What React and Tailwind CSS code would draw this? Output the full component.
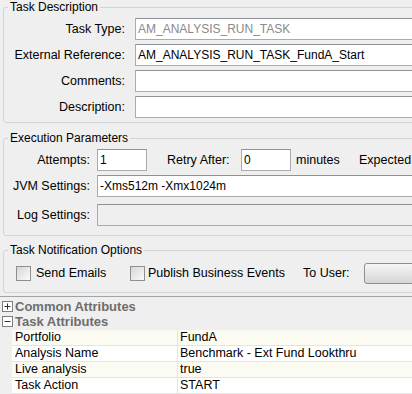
const Field = ({ children, className = '' }) => (
  <div className={`h-[22px] border border-[#a9abae] border-t-[#8e9196] bg-white pl-[2px] flex items-center text-[12px] leading-none whitespace-nowrap ${className}`}>
    {children}
  </div>
);

const Box = () => (
  <span className="w-[15px] h-[15px] shrink-0 border border-[#8e8f8f] bg-gradient-to-br from-[#d6d6d6] to-[#fbfbfb]" />
);

const TreeBox = ({ open }) => (
  <svg width="11" height="11" viewBox="0 0 11 11" className="shrink-0">
    <rect x="0.5" y="0.5" width="10" height="10" fill="#fff" stroke="#7f7f7f" />
    <path d="M2.5 5.5h6" stroke="#333" />
    {!open && <path d="M5.5 2.5v6" stroke="#333" />}
  </svg>
);

const attrs = [
  ['Portfolio', 'FundA'],
  ['Analysis Name', 'Benchmark - Ext Fund Lookthru'],
  ['Live analysis', 'true'],
  ['Task Action', 'START'],
];

export default function App() {
  return (
    <div className="w-[412px] h-[394px] overflow-hidden bg-[#efefef] text-[12.5px] text-black font-['Liberation_Sans',Arial,sans-serif]">
      <div className="w-[480px]">
        {/* task description */}
        <fieldset className="ml-[3px] border border-[#d0d5d9] rounded-[3px] pt-[4px] pb-[4px]">
          <legend className="ml-[4px] px-[2px] text-[12px] leading-[14px]">Task Description</legend>
          <div className="flex flex-col gap-[4px]">
            {[
              ['Task Type:', 'AM_ANALYSIS_RUN_TASK', 'text-[#8a8a8a]'],
              ['External Reference:', 'AM_ANALYSIS_RUN_TASK_FundA_Start', ''],
              ['Comments:', '', ''],
              ['Description:', '', ''],
            ].map(([l, v, c]) => (
              <div key={l} className="flex items-center">
                <span className="w-[121px] text-right whitespace-nowrap">{l}</span>
                <Field className={`ml-[10px] flex-1 ${c}`}>{v}</Field>
              </div>
            ))}
          </div>
        </fieldset>

        {/* execution parameters */}
        <fieldset className="ml-[3px] mt-[8px] border border-[#d0d5d9] rounded-[3px] pt-[4px] pb-[9px]">
          <legend className="ml-[4px] px-[2px] text-[12px] leading-[14px]">Execution Parameters</legend>
          <div className="flex items-center">
            <span className="w-[86px] text-right">Attempts:</span>
            <Field className="ml-[7px] w-[50px]">1</Field>
            <span className="ml-[20px] w-[62px] whitespace-nowrap">Retry After:</span>
            <Field className="ml-[12px] w-[50px]">0</Field>
            <span className="ml-[5px] w-[43px]">minutes</span>
            <span className="ml-[20px]">Expected</span>
          </div>
          <div className="flex items-center mt-[4px]">
            <span className="w-[86px] text-right whitespace-nowrap">JVM Settings:</span>
            <Field className="ml-[7px] flex-1">-Xms512m -Xmx1024m</Field>
          </div>
          <div className="flex items-center mt-[7px]">
            <span className="w-[86px] text-right whitespace-nowrap">Log Settings:</span>
            <Field className="ml-[7px] flex-1 !bg-[#efefef]" />
          </div>
        </fieldset>

        {/* notification options */}
        <fieldset className="ml-[3px] mt-[7px] border border-[#d0d5d9] rounded-[3px] pt-[6px] pb-[8px]">
          <legend className="ml-[4px] px-[2px] text-[12px] leading-[14px]">Task Notification Options</legend>
          <div className="flex items-center h-[21px] whitespace-nowrap">
            <span className="ml-[12px] flex"><Box /></span>
            <span className="ml-[5px] w-[70px]">Send Emails</span>
            <span className="ml-[24px] flex"><Box /></span>
            <span className="ml-[3px] w-[140px]">Publish Business Events</span>
            <span className="ml-[15px] w-[49px]">To User:</span>
            <button className="ml-[12px] w-[90px] h-[21px] rounded-[3px] border border-[#8f8f8f] bg-gradient-to-b from-[#f6f6f6] to-[#d6d6d6]" />
          </div>
        </fieldset>

        {/* attribute sheet */}
        <div className="mt-[3px] border-t border-[#a3a3a3]">
          <div className="flex items-center gap-[2px] pl-[2px] h-[15px] mt-[2px] text-[13px] font-bold text-[#6d6d6d] leading-none">
            <TreeBox /> Common Attributes
          </div>
          <div className="flex items-center gap-[2px] pl-[2px] h-[15px] text-[13px] font-bold text-[#6d6d6d] leading-none">
            <TreeBox open /> Task Attributes
          </div>
          <div className="ml-[12px] mt-[1px]">
            {attrs.map(([k, v], i) => (
              <div key={k} className={`grid grid-cols-[166px_1fr] h-[16px] border-b border-[#e4e4e4] leading-[15px] ${i % 2 ? 'bg-white' : 'bg-[#fcfbf1]'}`}>
                <span className="pl-[3px] border-r border-[#e4e4e4]">{k}</span>
                <span className="pl-[2px]">{v}</span>
              </div>
            ))}
          </div>
        </div>
      </div>
    </div>
  );
}
